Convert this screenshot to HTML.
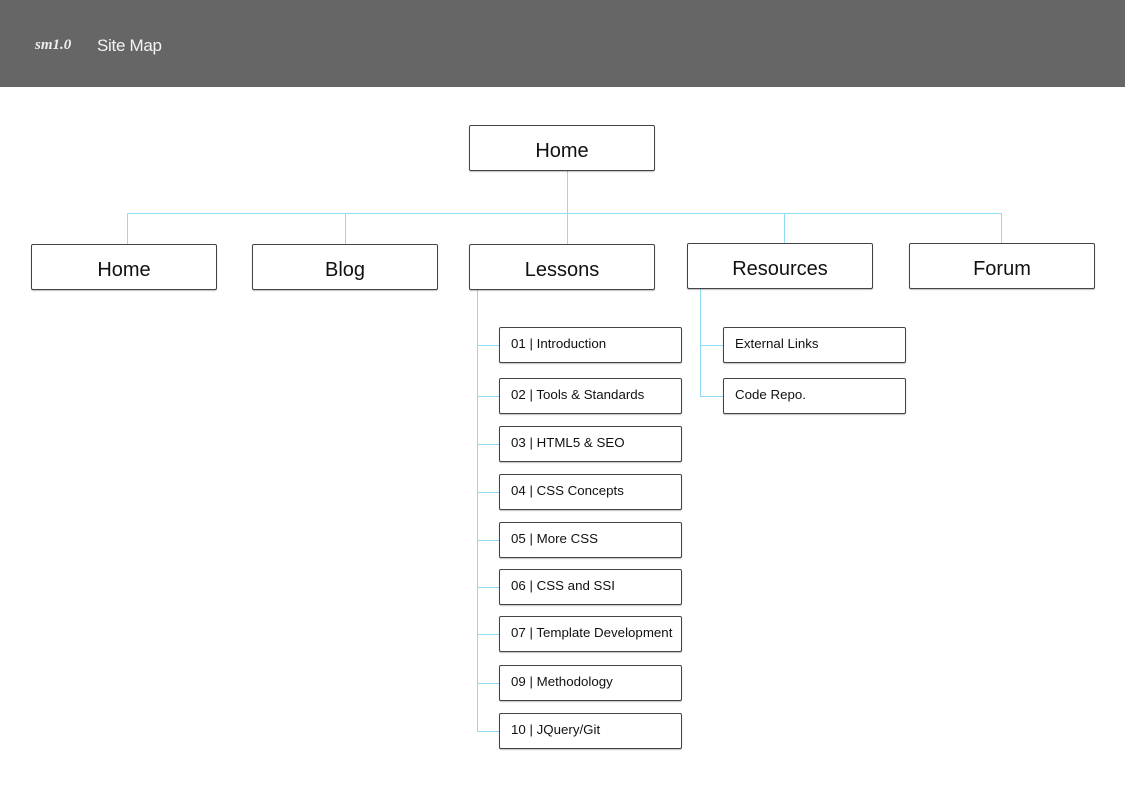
<!DOCTYPE html>
<html><head><meta charset="utf-8"><style>
body{margin:0;width:1125px;height:792px;background:#fff;position:relative;overflow:hidden;font-family:"Liberation Sans",sans-serif}
.hdr{position:absolute;left:0;top:0;width:1125px;height:87px;background:#666}
.logo{position:absolute;left:35px;top:37px;color:#eee;font-family:"Liberation Serif",serif;font-style:italic;font-weight:bold;font-size:15px}
.title{position:absolute;left:97px;top:36px;color:#f4f4f4;font-size:17px;letter-spacing:-0.3px}
.b{position:absolute;box-sizing:border-box;border:1px solid #444;border-radius:2px;box-shadow:0 1px 1px rgba(0,0,0,.25);background:#fff;color:#111}
.big{width:186px;height:46px;font-size:20px;text-align:center;line-height:50px}
.sm{width:183px;height:36px;font-size:13.3px;line-height:32px;padding-left:11px}
.l{position:absolute;background:#8fdcf4}
</style></head><body>
<div class="hdr"><div class="logo">sm1.0</div><div class="title">Site Map</div></div>
<div class="l" style="left:567px;top:170px;width:1px;height:44px"></div>
<div class="l" style="left:127px;top:213px;width:875px;height:1px"></div>
<div class="l" style="left:127px;top:213px;width:1px;height:31px"></div>
<div class="l" style="left:345px;top:213px;width:1px;height:31px"></div>
<div class="l" style="left:567px;top:213px;width:1px;height:31px"></div>
<div class="l" style="left:784px;top:213px;width:1px;height:30px"></div>
<div class="l" style="left:1001px;top:213px;width:1px;height:30px"></div>
<div class="l" style="left:477px;top:290px;width:1px;height:441px"></div>
<div class="l" style="left:700px;top:289px;width:1px;height:107px"></div>
<div class="b big" style="left:469px;top:125px">Home</div>
<div class="b big" style="left:31px;top:244px">Home</div>
<div class="b big" style="left:252px;top:244px">Blog</div>
<div class="b big" style="left:469px;top:244px">Lessons</div>
<div class="b big" style="left:687px;top:243px">Resources</div>
<div class="b big" style="left:909px;top:243px">Forum</div>

<div class="l" style="left:477px;top:345px;width:22px;height:1px"></div>
<div class="b sm" style="left:499px;top:327px">01 | Introduction</div>
<div class="l" style="left:477px;top:396px;width:22px;height:1px"></div>
<div class="b sm" style="left:499px;top:378px">02 | Tools &amp; Standards</div>
<div class="l" style="left:477px;top:444px;width:22px;height:1px"></div>
<div class="b sm" style="left:499px;top:426px">03 | HTML5 &amp; SEO</div>
<div class="l" style="left:477px;top:492px;width:22px;height:1px"></div>
<div class="b sm" style="left:499px;top:474px">04 | CSS Concepts</div>
<div class="l" style="left:477px;top:540px;width:22px;height:1px"></div>
<div class="b sm" style="left:499px;top:522px">05 | More CSS</div>
<div class="l" style="left:477px;top:587px;width:22px;height:1px"></div>
<div class="b sm" style="left:499px;top:569px">06 | CSS and SSI</div>
<div class="l" style="left:477px;top:634px;width:22px;height:1px"></div>
<div class="b sm" style="left:499px;top:616px">07 | Template Development</div>
<div class="l" style="left:477px;top:683px;width:22px;height:1px"></div>
<div class="b sm" style="left:499px;top:665px">09 | Methodology</div>
<div class="l" style="left:477px;top:731px;width:22px;height:1px"></div>
<div class="b sm" style="left:499px;top:713px">10 | JQuery/Git</div>

<div class="l" style="left:700px;top:345px;width:23px;height:1px"></div>
<div class="b sm" style="left:723px;top:327px">External Links</div>
<div class="l" style="left:700px;top:396px;width:23px;height:1px"></div>
<div class="b sm" style="left:723px;top:378px">Code Repo.</div>
</body></html>
